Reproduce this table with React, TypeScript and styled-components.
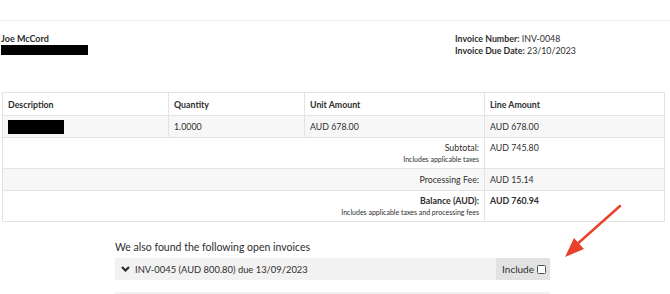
import * as React from 'react';
import styled, { createGlobalStyle } from 'styled-components';

const GlobalStyle = createGlobalStyle`
  html, body {
    margin: 0;
    padding: 0;
    background: #ffffff;
  }
  body {
    font-family: Lato, "Open Sans", sans-serif;
    color: #2e2e2e;
  }
  * {
    box-sizing: border-box;
  }
`;

const Page = styled.div`
  width: 670px;
  height: 294px;
  overflow: hidden;
  position: relative;
  padding-top: 20px;
`;

const Divider = styled.div`
  border-top: 1px solid #ececec;
`;

const Header = styled.div`
  display: flex;
  padding: 12px 6px 0 1px;
  height: 71px;
`;

const Customer = styled.div`
  flex: 1;
`;

const Name = styled.div`
  font-size: 9px;
  font-weight: 700;
  line-height: 12px;
`;

const Redacted = styled.div<{ $w: number; $h: number }>`
  width: ${(p) => p.$w}px;
  height: ${(p) => p.$h}px;
  background: #000;
`;

const Meta = styled.div`
  width: 209px;
  font-size: 8.8px;
  line-height: 12px;
`;

const MetaLabel = styled.b`
  font-weight: 700;
`;

const Table = styled.table`
  margin-left: 2px;
  width: 662px;
  border-collapse: collapse;
  table-layout: fixed;
  font-size: 8.8px;
`;

const Row = styled.tr<{ $shade?: boolean }>`
  background: ${(p) => (p.$shade ? '#f7f7f7' : '#ffffff')};
`;

const Th = styled.th<{ $w: number }>`
  width: ${(p) => p.$w}px;
  height: 23px;
  border: 1px solid #e3e3e3;
  text-align: left;
  font-weight: 700;
  padding: 0 5px;
`;

const Td = styled.td<{ $tall?: boolean; $right?: boolean; $bold?: boolean }>`
  height: ${(p) => (p.$tall ? 31 : 22)}px;
  border: 1px solid #e3e3e3;
  padding: ${(p) => (p.$tall ? '4px 5px 0' : '0 5px')};
  vertical-align: ${(p) => (p.$tall ? 'top' : 'middle')};
  text-align: ${(p) => (p.$right ? 'right' : 'left')};
  font-weight: ${(p) => (p.$bold ? 700 : 400)};
  line-height: 12px;
`;

const Note = styled.div`
  font-size: 7px;
  line-height: 10px;
  font-weight: 400;
`;

const Others = styled.div`
  margin: 18px 0 0 115px;
  width: 435px;
`;

const OthersTitle = styled.div`
  font-size: 10.5px;
  line-height: 14px;
  margin-bottom: 4px;
`;

const Accordion = styled.div<{ $gap?: number }>`
  display: flex;
  align-items: stretch;
  height: 22px;
  background: #f2f2f2;
  margin-bottom: ${(p) => p.$gap ?? 0}px;
`;

const Summary = styled.div`
  flex: 1;
  display: flex;
  align-items: center;
  gap: 5px;
  padding-left: 6px;
  font-size: 9.4px;
`;

const IncludeBox = styled.label`
  display: flex;
  align-items: center;
  gap: 3px;
  padding: 0 4px 0 6px;
  background: #e2e2e2;
  font-size: 10px;
`;

const Check = styled.span`
  width: 9px;
  height: 9px;
  border: 1px solid #555;
  border-radius: 1.5px;
  background: #fff;
`;

const Arrow = styled.svg`
  position: absolute;
  left: 555px;
  top: 200px;
`;

export default function App() {
  return (
    <Page>
      <GlobalStyle />
      <Divider />
      <Header>
        <Customer>
          <Name>Joe McCord</Name>
          <Redacted $w={87} $h={10} />
        </Customer>
        <Meta>
          <div>
            <MetaLabel>Invoice Number:</MetaLabel> INV-0048
          </div>
          <div>
            <MetaLabel>Invoice Due Date:</MetaLabel> 23/10/2023
          </div>
        </Meta>
      </Header>
      <Table>
        <thead>
          <Row>
            <Th $w={166}>Description</Th>
            <Th $w={136}>Quantity</Th>
            <Th $w={180}>Unit Amount</Th>
            <Th $w={180}>Line Amount</Th>
          </Row>
        </thead>
        <tbody>
          <Row $shade>
            <Td>
              <Redacted $w={56} $h={14} />
            </Td>
            <Td>1.0000</Td>
            <Td>AUD 678.00</Td>
            <Td>AUD 678.00</Td>
          </Row>
          <Row>
            <Td $tall $right colSpan={3}>
              Subtotal:
              <Note>Includes applicable taxes</Note>
            </Td>
            <Td $tall>AUD 745.80</Td>
          </Row>
          <Row $shade>
            <Td $right colSpan={3}>
              Processing Fee:
            </Td>
            <Td>AUD 15.14</Td>
          </Row>
          <Row>
            <Td $tall $right $bold colSpan={3}>
              Balance (AUD):
              <Note>Includes applicable taxes and processing fees</Note>
            </Td>
            <Td $tall $bold>
              AUD 760.94
            </Td>
          </Row>
        </tbody>
      </Table>
      <Others>
        <OthersTitle>We also found the following open invoices</OthersTitle>
        <Accordion $gap={12}>
          <Summary>
            <svg width="9" height="6" viewBox="0 0 9 6">
              <path d="M1 1 L4.5 4.5 L8 1" fill="none" stroke="#2e2e2e" strokeWidth="2.2" />
            </svg>
            INV-0045 (AUD 800.80) due 13/09/2023
          </Summary>
          <IncludeBox>
            Include <Check />
          </IncludeBox>
        </Accordion>
        <Accordion />
      </Others>
      <Arrow width="70" height="62" viewBox="0 0 70 62">
        <line x1="65" y1="6" x2="20" y2="46" stroke="#e8412c" strokeWidth="2.5" strokeLinecap="round" />
        <polygon points="10,57 19,38 29,49" fill="#e8412c" />
      </Arrow>
    </Page>
  );
}
